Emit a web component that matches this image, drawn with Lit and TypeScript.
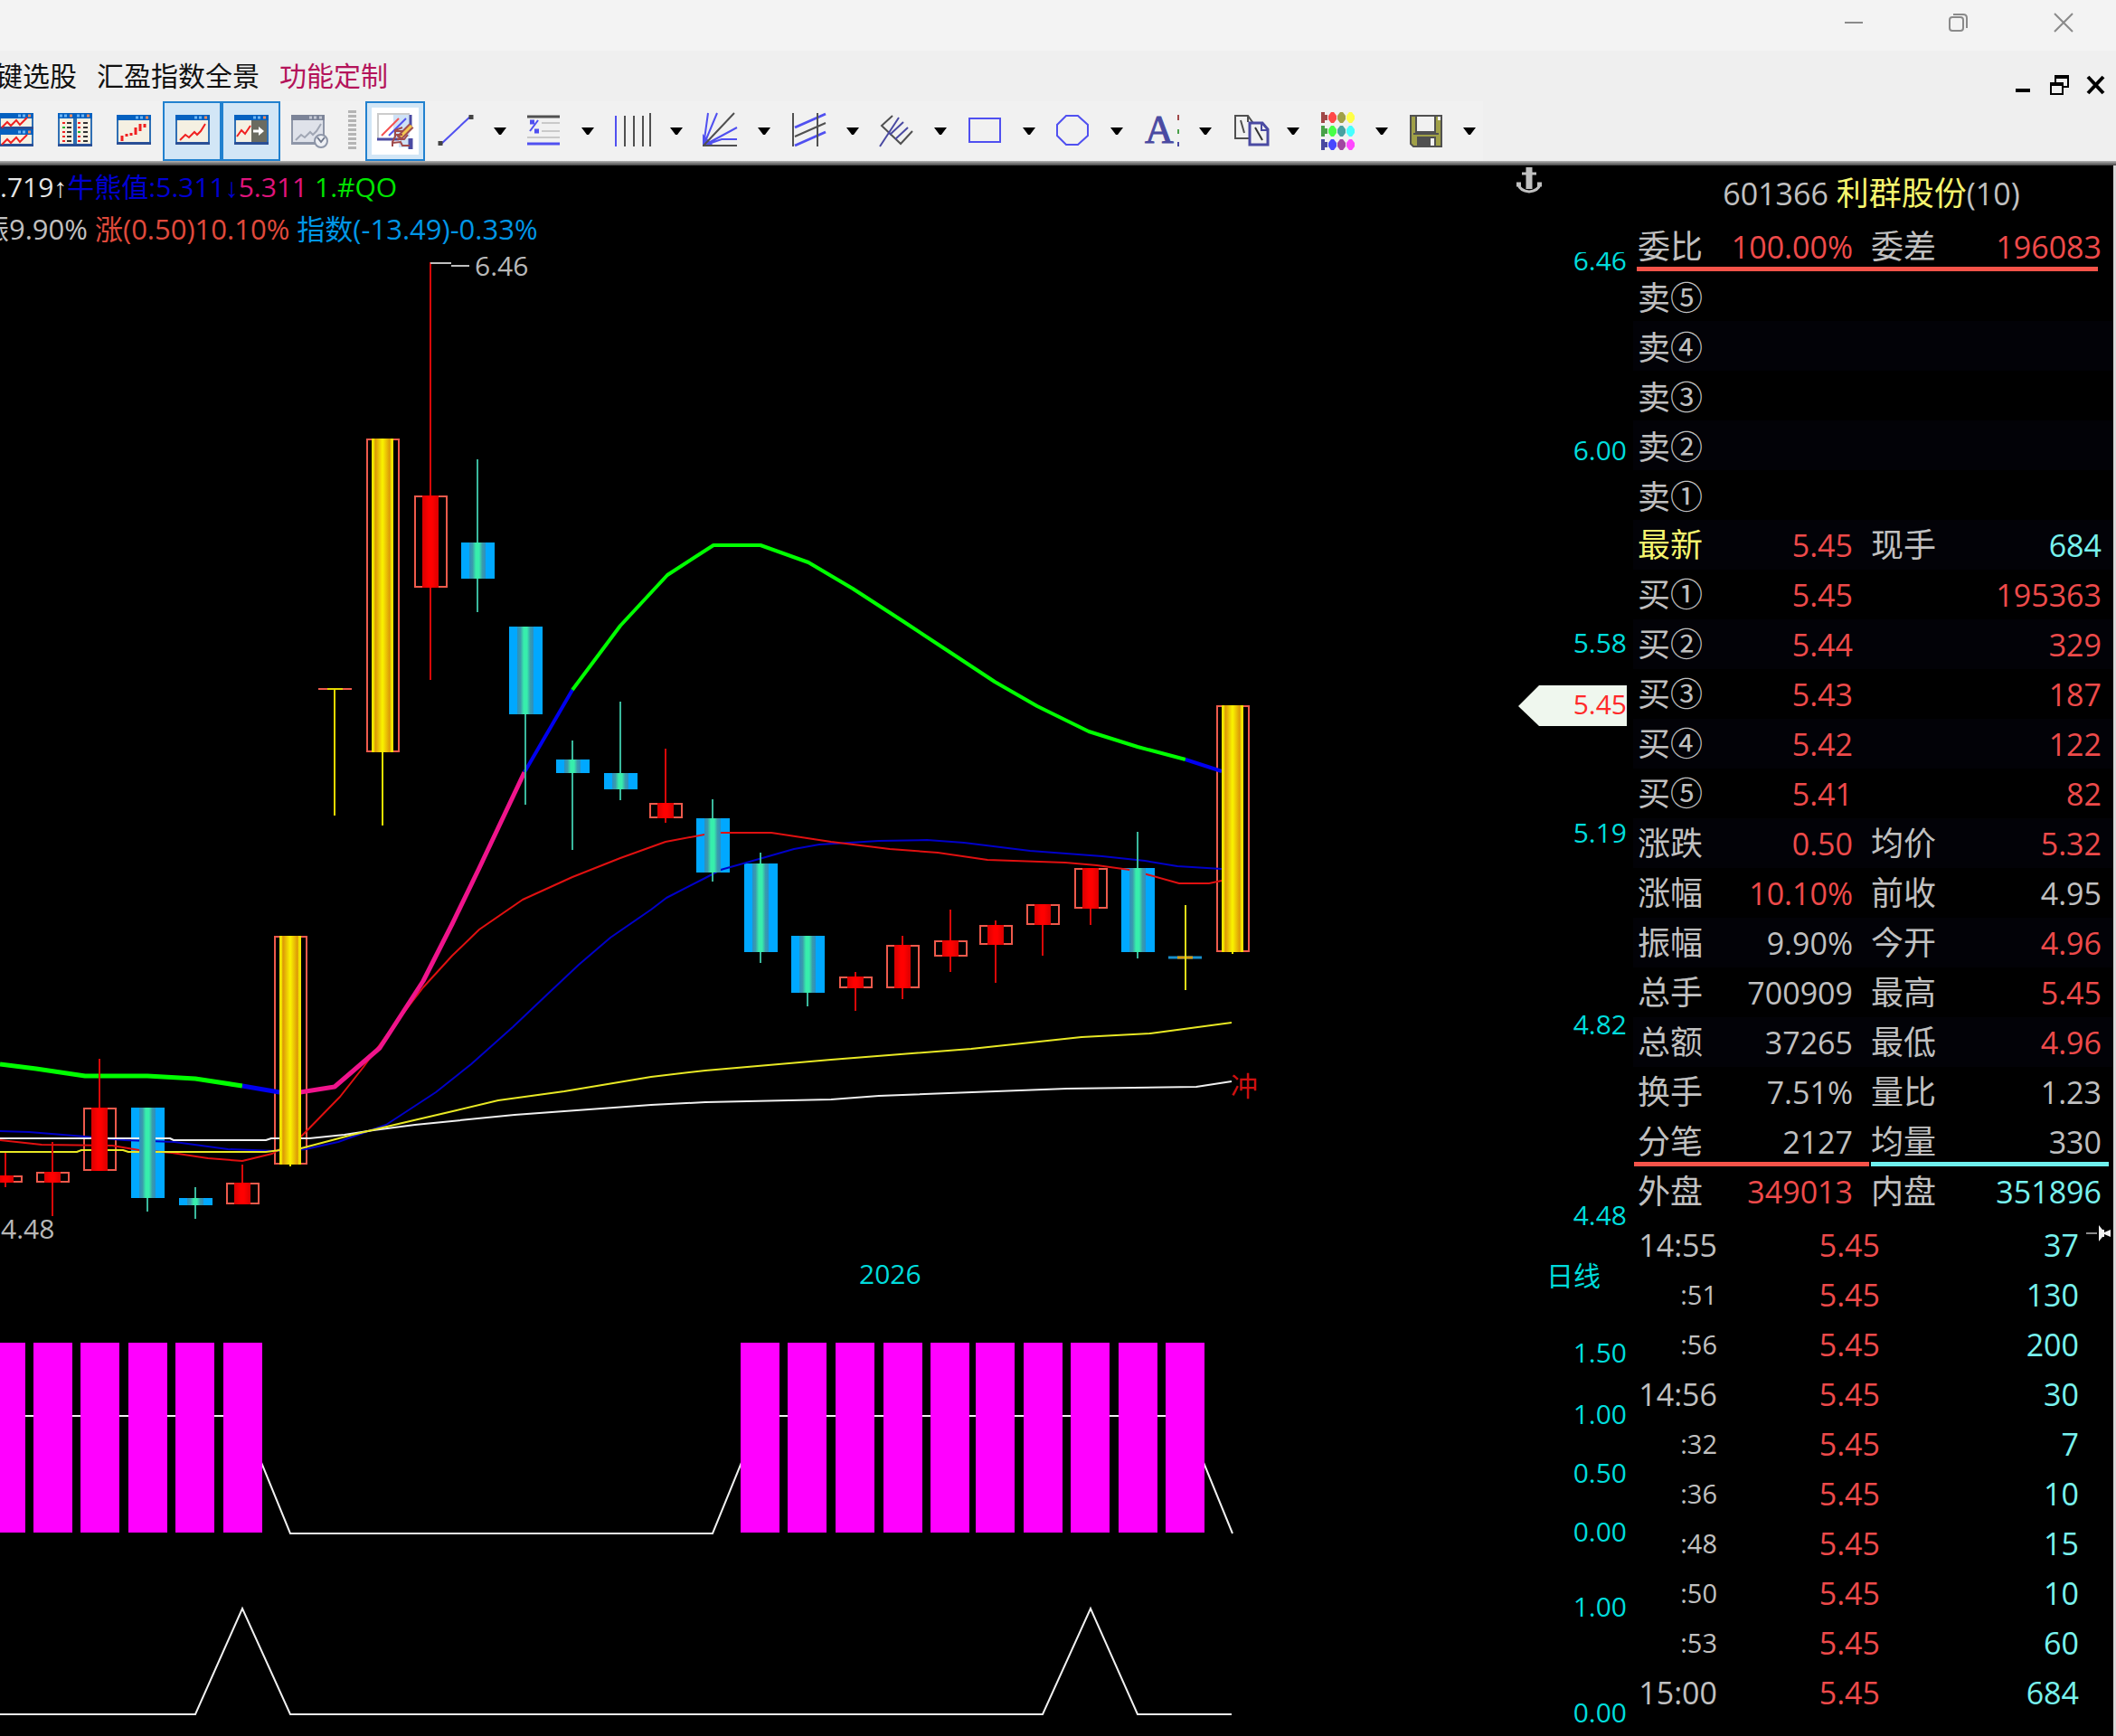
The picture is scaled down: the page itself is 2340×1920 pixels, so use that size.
import { LitElement, html, svg, css } from "lit";
import { customElement } from "lit/decorators.js";

type Kind = "red" | "cyan" | "gold";
// centre x, kind, body top, body bottom, wick top, wick bottom
type Candle = [number, Kind, number, number, number, number];

const candles: Candle[] = [
  [6, "red", 1300, 1308, 1275, 1313],
  [58, "red", 1296, 1308, 1263, 1345],
  [110, "red", 1225, 1295, 1171, 1295],
  [163, "cyan", 1225, 1325, 1225, 1340],
  [216, "cyan", 1325, 1333, 1313, 1348],
  [268, "red", 1308, 1332, 1288, 1332],
  [321, "gold", 1035, 1288, 1035, 1290],
  [423, "gold", 485, 832, 485, 913],
  [476, "red", 548, 650, 290, 752],
  [528, "cyan", 600, 640, 508, 677],
  [581, "cyan", 693, 790, 693, 890],
  [633, "cyan", 840, 855, 819, 940],
  [686, "cyan", 855, 873, 776, 885],
  [736, "red", 888, 905, 828, 910],
  [788, "cyan", 905, 965, 884, 975],
  [841, "cyan", 955, 1053, 943, 1065],
  [893, "cyan", 1035, 1098, 1035, 1113],
  [946, "red", 1080, 1093, 1075, 1118],
  [998, "red", 1045, 1093, 1035, 1105],
  [1051, "red", 1040, 1058, 1006, 1075],
  [1101, "red", 1023, 1045, 1018, 1087],
  [1153, "red", 1000, 1023, 1000, 1057],
  [1206, "red", 960, 1005, 960, 1023],
  [1258, "cyan", 960, 1053, 920, 1060],
  [1363, "gold", 780, 1053, 780, 1055],
];

const lines: [string, number, string][] = [
  ["#0000c8", 2, "0,1251 32,1252 94,1257 138,1261 193,1263 252,1271 305,1273 338,1271 374,1263 399,1254 427,1244 482,1208 521,1177 567,1136 606,1099 640,1067 675,1037 720,1006 737,993 780,971 797,962 829,953 878,939 906,934 972,930 1025,929 1066,932 1139,941 1219,947 1266,952 1302,958 1351,961"],
  ["#e01010", 2, "0,1261 46,1266 124,1267 154,1272 190,1275 230,1281 268,1284 301,1276 333,1257 376,1213 402,1180 429,1143 468,1092 500,1057 530,1028 578,995 633,970 686,949 736,931 779,923 797,921 853,921 919,931 984,939 1037,943 1092,951 1178,954 1213,957 1249,962 1268,967 1304,977 1337,977 1351,974"],
  ["#f0f0f0", 2, "0,1259 188,1259 192,1261 294,1261 300,1259 342,1259 381,1255 413,1250 459,1244 569,1233 720,1222 780,1219 919,1216 972,1212 1180,1204 1323,1202 1362,1196"],
  ["#e8e824", 2, "0,1274 85,1274 90,1272 136,1272 142,1274 294,1274 310,1272 333,1270 390,1255 432,1245 505,1228 551,1217 624,1207 720,1191 780,1184 919,1172 1074,1160 1196,1147 1272,1143 1362,1131"],
  ["#00ff00", 5, "0,1177 40,1182 94,1190 163,1190 216,1193 268,1201"],
  ["#0000f0", 5, "268,1201 309,1208"],
  ["#f0148c", 5, "332,1208 370,1202 420,1159 468,1085 500,1022 530,960 580,854"],
  ["#0000f0", 4, "580,854 633,763"],
  ["#00ff00", 4, "633,763 686,692 738,636 789,603 841,603 894,622 943,651 1000,688 1050,721 1100,754 1147,781 1204,809 1258,826 1311,840"],
  ["#0000f0", 4, "1311,840 1351,853"],
];

const priceAxis: [string, number][] = [
  ["6.46", 299], ["6.00", 509], ["5.58", 722], ["5.19", 932], ["4.82", 1144], ["4.48", 1355],
];
const barX = [-15, 37, 89, 142, 194, 247, 819, 871, 924, 977, 1029, 1079, 1132, 1184, 1237, 1289];

type Cell = [string, string];
const sells = ["⑤", "④", "③", "②", "①"];
const quotes: [Cell, Cell, Cell, Cell][] = [
  [["委比", ""], ["100.00%", "r"], ["委差", ""], ["196083", "r"]],
  ...sells.map((n) => [["卖" + n, "sell"], ["", ""], ["", ""], ["", ""]] as [Cell, Cell, Cell, Cell]),
  [["最新", "y"], ["5.45", "r"], ["现手", ""], ["684", "c"]],
  [["买①", ""], ["5.45", "r"], ["", ""], ["195363", "r"]],
  [["买②", ""], ["5.44", "r"], ["", ""], ["329", "r"]],
  [["买③", ""], ["5.43", "r"], ["", ""], ["187", "r"]],
  [["买④", ""], ["5.42", "r"], ["", ""], ["122", "r"]],
  [["买⑤", ""], ["5.41", "r"], ["", ""], ["82", "r"]],
  [["涨跌", ""], ["0.50", "r"], ["均价", ""], ["5.32", "r"]],
  [["涨幅", ""], ["10.10%", "r"], ["前收", ""], ["4.95", ""]],
  [["振幅", ""], ["9.90%", ""], ["今开", ""], ["4.96", "r"]],
  [["总手", ""], ["700909", ""], ["最高", ""], ["5.45", "r"]],
  [["总额", ""], ["37265", ""], ["最低", ""], ["4.96", "r"]],
  [["换手", ""], ["7.51%", ""], ["量比", ""], ["1.23", ""]],
  [["分笔", ""], ["2127", ""], ["均量", ""], ["330", ""]],
  [["外盘", ""], ["349013", "r"], ["内盘", ""], ["351896", "c"]],
];
const ticks: [string, string][] = [
  ["14:55", "37"], [":51", "130"], [":56", "200"], ["14:56", "30"], [":32", "7"],
  [":36", "10"], [":48", "15"], [":50", "10"], [":53", "60"], ["15:00", "684"],
];

const pane = (x: number, y: number, w: number, h: number, gray = false) => svg`
  <rect x=${x} y=${y} width=${w} height=${h} fill=${gray ? "#8e96a8" : "#2f6fb4"}/>
  <rect x=${x} y=${y} width=${w} height="6" fill=${gray ? "#7c8498" : "#0561c0"}/>
  <rect x=${x + 2} y=${y + 6} width=${w - 4} height=${h - 9} fill=${gray ? "#dfe2ea" : "#f5f0e2"}/>
  <rect x=${x} y=${y + h - 3} width=${w} height="3" fill=${gray ? "#8e96a8" : "#2a4f96"}/>
  <path d=${`M${x + w - 17} ${y + 3}h3m2 0h3`} stroke=${gray ? "#c4c8d4" : "#6db4f4"} stroke-width="3"/>
  <path d=${`M${x + w - 6} ${y + 3}h3`} stroke=${gray ? "#c4c8d4" : "#f08a5c"} stroke-width="3"/>`;

const icon = (body: unknown) =>
  html`<svg class="ico" viewBox="0 0 44 44" aria-hidden="true" fill="none">${body}</svg>`;

const BL = "#5050f0";
const NV = "#4a4aa2";
const GY = "#505050";

const viewIcons: [string, boolean, unknown][] = [
  ["叠窗", false, svg`${pane(3, 2, 38, 18)}${pane(3, 20, 38, 19)}
    <path d="M6 18l6-6 4 4 6-6 4 5 8-8M6 37l6-6 4 4 6-6 4 5 8-8" stroke="#f02020" stroke-width="2"/>`],
  ["双列", false, svg`${pane(3, 2, 19, 37)}${pane(22, 2, 19, 37)}
    <path d="M8 13h3M8 23h3M8 28h3M8 33h3M25 13h3M25 28h3M25 33h3M25 18h3" stroke="#f02020" stroke-width="2"/>
    <path d="M8 18h3M25 23h3" stroke="#20b030" stroke-width="2"/>
    <path d="M13 13h5M13 18h5M13 23h5M13 28h5M13 33h5M31 13h5M31 18h5M31 23h5M31 28h5M31 33h5" stroke="#333" stroke-width="2"/>`],
  ["分时", false, svg`${pane(3, 4, 38, 33)}
    <path d="M9 33v-6M14 28v-3M19 27v-3M24 26v-8M29 22v-8M34 18v-4" stroke="#f02020" stroke-width="3"/>`],
  ["走势", true, svg`${pane(3, 4, 38, 33)}
    <path d="M8 32l6-6 4 3 6-6 3 3 4-4 5-8" stroke="#f02020" stroke-width="2"/>`],
  ["切换", true, svg`${pane(3, 4, 38, 33)}
    <rect x="22" y="10" width="17" height="24" fill="#6b6b60"/>
    <path d="M6 28l5-7 4 4 6-9" stroke="#f02020" stroke-width="2"/>
    <path d="M24 22h9" stroke="#fff" stroke-width="3"/><path d="M30 17l6 5-6 5z" fill="#fff"/>`],
  ["历史", false, svg`${pane(1, 4, 37, 33, true)}
    <path d="M6 32l6-6 4 3 6-6 3 3 4-4 5-8" stroke="#a0a6b4" stroke-width="2"/>
    <circle cx="34" cy="33" r="7" fill="#eef0f4" stroke="#8e96a8" stroke-width="2"/>
    <path d="M30 29l4 5 4-5" stroke="#70788c" stroke-width="2"/>`],
];

const drawIcon = svg`
  <rect width="44" height="44" fill="#fff"/>
  <rect x="20" y="4" width="18" height="25" fill="#cfe2f6"/>
  <rect x="26" y="30" width="14" height="10" fill="#cfe2f6"/>
  <path d="M3 30V3h35" stroke="#cccccc" stroke-width="2"/>
  <path d="M2 31h24M39 4v14" stroke=${NV} stroke-width="3"/>
  <path d="M39 30v12" stroke=${NV} stroke-width="5"/>
  <path d="M7 27L26 8" stroke="#f45050" stroke-width="2"/>
  <path d="M15 27L34 8" stroke=${BL} stroke-width="2"/>
  <path d="M26 30L40 16" stroke="#a05050" stroke-width="7"/>
  <path d="M28 28L40 16" stroke="#f4c850" stroke-width="3"/>
  <path d="M30 18l-8 3v7l-3 6v5M22 22h9M22 26h8M24 31h8l4-5M19 35l9-1 2 4h8" stroke="#a04a4a" stroke-width="2"/>`;

const drawTools: [string, unknown][] = [
  ["直线", svg`<path d="M5 37L39 5" stroke=${BL} stroke-width="2"/><path d="M5 33v5M39 4v5" stroke="#444" stroke-width="5"/>`],
  ["百分比线", svg`<path d="M4 6h36" stroke=${GY} stroke-width="3"/><path d="M20 13h20M20 22h20M4 29h36" stroke="#c9c9c9" stroke-width="2"/>
    <path d="M4 36h36" stroke=${BL} stroke-width="3"/><path d="M7 12h5M12 22h5" stroke=${BL} stroke-width="5"/><path d="M7 22l9-12" stroke=${BL} stroke-width="2"/>`],
  ["周期线", svg`<path d="M4 5v34" stroke=${BL} stroke-width="2"/><path d="M14 5v34M24 5v34M34 5v34M42 2v37" stroke=${GY} stroke-width="2"/>`],
  ["扇形线", svg`<path d="M4 38L9 2M4 38L19 2M4 38L41 18M4 38L24 31H41" stroke=${BL} stroke-width="2"/>
    <path d="M3 25L15 38H3z" fill=${BL}/><path d="M4 38L38 2M3 38h38" stroke=${GY} stroke-width="2"/>`],
  ["通道线", svg`<path d="M7 18L32 7 41 3M7 38L41 23" stroke=${BL} stroke-width="3"/><path d="M7 28L41 13M5 2v37M32 2v37" stroke=${GY} stroke-width="2"/>`],
  ["叉线", svg`<path d="M18 5L6 16 27 36 40 22" stroke=${GY} stroke-width="2"/><path d="M4 39L25 7M30 12L15 26M35 18L21 31" stroke=${NV} stroke-width="2"/>`],
  ["矩形", svg`<rect x="5" y="8" width="34" height="26" stroke=${BL} stroke-width="2"/>`],
  ["圆形", svg`<path d="M15 5H28L39 15V27L28 37H15L5 27V15z" stroke=${BL} stroke-width="2"/>`],
  ["文字", svg`<text class="serif" x="4" y="35" fill=${NV}>A</text><path d="M41 4v6" stroke="#a04848" stroke-width="2"/>
    <path d="M41 20v5" stroke="#48a048" stroke-width="2"/><path d="M41 34v5" stroke=${NV} stroke-width="2"/>`],
  ["复制", svg`<g transform="translate(3 0)"><path d="M4 5H18L23 12V30H4z" fill="#f1f1f1" stroke=${GY} stroke-width="2"/><path d="M10 10l4 14M18 5v7" stroke=${GY} stroke-width="2"/>
    <path d="M20 13H34L40 20V37H20z" fill="#f1f1f1" stroke=${NV} stroke-width="3"/><path d="M33 13v8h7" stroke=${NV} stroke-width="2"/><path d="M26 18l8 14" stroke="#333" stroke-width="2"/></g>`],
  ["颜色", svg`${[
    ["#a04848", "#ff4848", "#a0a048", "#ffff48"],
    ["#48a048", "#48ff48", "#48a0a0", "#48ffff"],
    ["#4848a0", "#4848ff", "#a048a0", "#ff48ff"],
  ].map((row, r) => row.map((c, i) => i === 0
    ? svg`<path d=${`M4 ${1 + r * 15}h4v3h3v6h-3v3h-4z`} fill=${c}/>`
    : svg`<path d=${`M${15 + (i - 1) * 10} ${1 + r * 15}h3l3 4v4l-3 4h-3l-3-4v-4z`} fill=${c}/>`))}`],
  ["保存", svg`<path d="M6 5H40V39H9L6 36z" fill="#a0a048" stroke=${GY} stroke-width="2"/><rect x="12" y="5" width="21" height="18" fill="#f1f1f1" stroke=${GY} stroke-width="2"/>
    <rect x="13" y="28" width="21" height="11" fill=${GY}/><rect x="28" y="30" width="4" height="8" fill="#f1f1f1"/><path d="M9 25h28" stroke=${GY} stroke-width="2"/><rect x="36" y="6" width="3" height="4" fill="#f1f1f1"/>`],
];

@customElement("app-root")
export class AppRoot extends LitElement {
  static styles = css`
    :host {
      display: block;
      font-family: "Open Sans", "Noto Sans CJK SC", sans-serif;
      font-size: 30px;
      color: #c0c0c0;
    }
    * { box-sizing: border-box; }
    button {
      font: inherit;
      color: inherit;
      background: none;
      border: 0;
      padding: 0;
      display: flex;
      align-items: center;
      justify-content: center;
    }
    .app { min-height: 100vh; display: flex; flex-direction: column; background: #000; overflow: hidden; }
    .title { display: flex; justify-content: flex-end; height: 56px; background: #f3f3f3; }
    .title button { width: 116px; height: 50px; }
    .win { width: 22px; height: 22px; }
    .menu { display: flex; align-items: center; justify-content: space-between; height: 56px; background: #efefef; color: #111; }
    .items { display: flex; gap: 22px; margin-left: -5px; }
    .items button { line-height: 44px; white-space: nowrap; }
    .items .hot { color: #b4145a; }
    .mdi { display: flex; align-items: center; gap: 18px; padding: 20px 12px 0 0; }
    .tools { display: flex; height: 66px; background: #efefef; }
    .views { display: flex; margin-left: -15px; background: #f1f1f1; }
    .views button { width: 65px; height: 66px; }
    .ico { width: 44px; height: 44px; display: block; overflow: visible; }
    .on { background: #d2e6f6; box-shadow: inset 0 0 0 2px #2181cf; }
    .grip { width: 29px; padding: 10px 10px; background: #f1f1f1; }
    .grip i { display: block; height: 43px; background: repeating-linear-gradient(#b4b4b4 0 3px, transparent 3px 5px); }
    .pick { width: 66px; height: 66px; }
    .pick .ico { box-shadow: 0 0 0 4px #fff; }
    .draws { display: grid; grid-template-columns: repeat(12, 1fr); width: 1170px; background: #f1f1f1; }
    .split { display: grid; grid-template-columns: 1fr 30px; }
    .caret { width: 14px; height: 8px; }
    .edge { height: 5px; background: linear-gradient(#b4b4b4, #7c7c7c 50%, #444); }
    .serif { font-family: "Liberation Serif", serif; font-size: 44px; stroke: #4a4aa2; stroke-width: 1px; }
    .work { flex: 1; display: grid; grid-template-columns: minmax(0, 1fr) 531px; border-right: 3px solid #d8d8d8; }
    .info { display: flex; justify-content: space-between; height: 96px; padding-right: 100px; }
    .info p { margin: 0; height: 47px; line-height: 47px; white-space: pre; }
    .info .second { margin-left: -21px; font-size: 31px; }
    .arrow { font-family: "Liberation Sans", sans-serif; line-height: 30px; }
    .anchor { width: 30px; height: 30px; margin-top: 2px; }
    .plot { display: block; width: 100%; height: auto; font-size: 30px; }
    .wht { color: #e6e6e6; }
    .navy { color: #0000d2; }
    .pink { color: #e0147c; }
    .lime { color: #00e600; }
    .fall { color: #e04a3c; }
    .sky { color: #0096e6; }
    .panel { position: relative; font-size: 34px; }
    .panel h1 { margin: 0; height: 62px; line-height: 62px; font-size: 34px; font-weight: 400; text-align: center; padding-right: 4px; }
    .name { font-size: 36px; color: #f5f56e; }
    table { border-collapse: collapse; table-layout: fixed; width: 100%; }
    td, th { padding: 0; height: 55px; line-height: 50px; font-weight: 400; text-align: right; white-space: nowrap; }
    th { font-size: 36px; text-align: left; }
    .quote { background: linear-gradient(#f75349, #f75349) no-repeat 4px 50px / 510px 5px; }
    .quote th:first-child { padding-left: 5px; }
    .quote .sell { padding-top: 5px; }
    .c1 { width: 84px; }
    .c2 { width: 159px; }
    .c3 { width: 100px; }
    .quote th:nth-child(3) { padding-left: 20px; }
    .quote td:last-child { padding-right: 13px; }
    .zebra { background: #020207; }
    .y { color: #f5f56e; }
    .r { color: #ee4a4a; }
    .c { color: #78f2ee; }
    .rules { display: grid; grid-template-columns: 260px 1fr; gap: 2px; height: 5px; margin: -60px 5px 59px 1px; position: relative; }
    .rules i:first-child { background: #f75349; }
    .rules i:last-child { background: #6ef0ee; }
    .ticks .t1 { width: 93px; }
    .ticks .t2 { width: 180px; }
    .ticks td:last-child { padding-right: 38px; }
    .ticks .sec { font-size: 29px; }
    .pin { position: absolute; right: 1px; top: 1171px; width: 30px; height: 20px; }
  `;

  private candleBack([x, k, t, b]: Candle) {
    return k === "cyan"
      ? svg`<rect x=${x - 18} y=${t} width="37" height=${b - t} fill="#00a8ff"/>`
      : svg`<rect x=${x - 17} y=${t + 1} width="35" height=${b - t - 2} fill="none" stroke="#ee5a4c" stroke-width="2"/>`;
  }

  private candleFront([x, k, t, b, wt, wb]: Candle) {
    const wick = k === "cyan" ? "#3ab89c" : k === "red" ? "#d80808" : "#e6e600";
    const wide = k === "gold" ? 12 : 9;
    return svg`
      <path d=${`M${x} ${wt}V${wb}`} stroke=${wick} stroke-width="2"/>
      <rect x=${x - wide} y=${t} width=${wide * 2} height=${b - t} fill=${`url(#${k})`}/>`;
  }

  private priceChart() {
    return html`<svg class="plot" viewBox="0 279 1806 1161" role="img" aria-label="日线">
      <defs>
        <linearGradient id="red"><stop offset="0" stop-color="#d80000"/><stop offset=".4" stop-color="#ff0000"/><stop offset=".6" stop-color="#ff0000"/><stop offset="1" stop-color="#d80000"/></linearGradient>
        <linearGradient id="cyan"><stop offset="0" stop-color="#2c8fc0"/><stop offset=".2" stop-color="#3a9cac"/><stop offset=".4" stop-color="#37eeac"/><stop offset=".6" stop-color="#37eeac"/><stop offset=".8" stop-color="#3a9cac"/><stop offset="1" stop-color="#2c8fc0"/></linearGradient>
        <linearGradient id="gold"><stop offset="0" stop-color="#f0e400"/><stop offset=".1" stop-color="#f0e400"/><stop offset=".16" stop-color="#dc9608"/><stop offset=".5" stop-color="#faf400"/><stop offset=".84" stop-color="#dc9608"/><stop offset=".9" stop-color="#f0e400"/><stop offset="1" stop-color="#f0e400"/></linearGradient>
      </defs>
      ${candles.map((c) => this.candleBack(c))}
      ${lines.map(([c, w, p]) => svg`<polyline points=${p} fill="none" stroke=${c} stroke-width=${w} stroke-linejoin="round"/>`)}
      ${candles.map((c) => this.candleFront(c))}
      <path d="M352 762H389" stroke="#ee5a4c" stroke-width="2"/>
      <path d="M362 762H379M370 762V902" stroke="#e6d800" stroke-width="2"/>
      <path d="M1292 1059H1329" stroke="#1890cc" stroke-width="3"/>
      <path d="M1302 1059H1319" stroke="#d89a10" stroke-width="3"/>
      <path d="M1311 1001V1095" stroke="#e0dc18" stroke-width="2"/>
      <path d="M476 291H499M499 294H519" stroke="#c0c0c0" stroke-width="2"/>
      <text x="525" y="305" fill="#b8b8b8">6.46</text>
      <text x="1" y="1370" fill="#b8b8b8">4.48</text>
      <text x="1361" y="1212" fill="#d01010">冲</text>
      <text x="950" y="1420" fill="#00dcdc">2026</text>
      <path d="M1679 781L1702 758H1799V803H1702z" fill="#eff7ee"/>
      <text x="1799" y="790" text-anchor="end" fill="#ff2a2a">5.45</text>
      <g fill="#00dcdc" text-anchor="end">
        ${priceAxis.map(([t, y]) => svg`<text x="1799" y=${y}>${t}</text>`)}
        <text x="1770" y="1422">日线</text>
      </g>
    </svg>`;
  }

  private indicators() {
    return html`
      <svg class="plot" viewBox="0 1440 1806 280" role="img" aria-label="指标一">
        <polyline points="0,1566 268,1566 321,1696 788,1696 841,1566 1310,1566 1363,1696" fill="none" stroke="#f0f0f0" stroke-width="2"/>
        ${barX.map((x) => svg`<rect x=${x} y="1485" width="43" height="210" fill="#ff00ff"/>`)}
        <g fill="#00dcdc" text-anchor="end">
          <text x="1799" y="1507">1.50</text><text x="1799" y="1575">1.00</text>
          <text x="1799" y="1640">0.50</text><text x="1799" y="1705">0.00</text>
        </g>
      </svg>
      <svg class="plot" viewBox="0 1720 1806 200" role="img" aria-label="指标二">
        <polyline points="0,1896 216,1896 268,1779 321,1896 1153,1896 1206,1779 1258,1896 1362,1896" fill="none" stroke="#f0f0f0" stroke-width="2"/>
        <g fill="#00dcdc" text-anchor="end">
          <text x="1799" y="1788">1.00</text><text x="1799" y="1905">0.00</text>
        </g>
      </svg>`;
  }

  render() {
    return html`<div class="app">
      <header class="title">
        <button aria-label="最小化"><svg class="win" viewBox="0 0 22 22"><path d="M1 11H21" stroke="#8a8a8a" stroke-width="2"/></svg></button>
        <button aria-label="还原"><svg class="win" viewBox="0 0 22 22" fill="none" stroke="#8a8a8a" stroke-width="2"><rect x="1" y="5" width="15" height="15" rx="3"/><path d="M5 2H16Q20 2 20 6V17"/></svg></button>
        <button aria-label="关闭"><svg class="win" viewBox="0 0 22 22"><path d="M1 1L21 21M21 1L1 21" stroke="#8a8a8a" stroke-width="2"/></svg></button>
      </header>
      <nav class="menu">
        <div class="items">
          <button>键选股</button><button>汇盈指数全景</button><button class="hot">功能定制</button>
        </div>
        <div class="mdi">
          <button aria-label="最小化子窗口"><svg class="win" viewBox="0 0 22 22"><path d="M3 17H19" stroke="#000" stroke-width="4"/></svg></button>
          <button aria-label="还原子窗口"><svg class="win" viewBox="0 0 22 22" fill="none" stroke="#000" stroke-width="2"><path d="M2 9h13v12H2zM7 9V1h14v12h-6"/><path d="M1 10h15M6 2h16" stroke-width="4"/></svg></button>
          <button aria-label="关闭子窗口"><svg class="win" viewBox="0 0 22 22"><path d="M3 2L20 20M20 2L3 20" stroke="#000" stroke-width="4"/></svg></button>
        </div>
      </nav>
      <div class="tools">
        <div class="views">
          ${viewIcons.map(([n, on, b]) => html`<button aria-label=${n} class=${on ? "on" : ""}>${icon(b)}</button>`)}
        </div>
        <div class="grip"><i></i></div>
        <button class="pick on" aria-label="画线">${icon(drawIcon)}</button>
        <div class="draws">
          ${drawTools.map(([n, b]) => html`<div class="split">
            <button aria-label=${n}>${icon(b)}</button>
            <button aria-label=${n + "选项"}><svg class="caret" viewBox="0 0 14 8"><path d="M0 0H14L8 8H6z" fill="#000"/></svg></button>
          </div>`)}
        </div>
      </div>
      <div class="edge"></div>
      <main class="work">
        <section>
          <div class="info">
            <div>
              <p><span class="wht">.719<span class="arrow">↑</span></span><span class="navy">牛熊值:5.311<span class="arrow">↓</span></span><span class="pink">5.311</span><span class="lime"> 1.#QO</span></p>
              <p class="second">振9.90%<span class="fall"> 涨(0.50)10.10%</span><span class="sky"> 指数(-13.49)-0.33%</span></p>
            </div>
            <svg class="anchor" viewBox="0 0 30 30" fill="none" stroke="#c0c0c0"><path d="M15 0V24" stroke-width="7"/><path d="M7 7H23" stroke-width="3"/><path d="M3 19Q5 26 15 27Q25 26 27 19" stroke-width="3"/><path d="M1 19h5M24 19h5" stroke-width="5"/></svg>
          </div>
          ${this.priceChart()}
          ${this.indicators()}
        </section>
        <aside class="panel">
          <h1>601366 <span class="name">利群股份</span>(10)</h1>
          <table class="quote">
            <colgroup><col class="c1" /><col class="c2" /><col class="c3" /><col /></colgroup>
            <tbody>
              ${quotes.map(([a, b, c, d], i) => html`<tr class=${i > 0 && i < 18 && i % 2 === 0 ? "zebra" : ""}>
                <th class=${a[1]}>${a[0]}</th><td class=${b[1]}>${b[0]}</td>
                <th class=${c[1]}>${c[0]}</th><td class=${d[1]}>${d[0]}</td>
              </tr>`)}
            </tbody>
          </table>
          <div class="rules"><i></i><i></i></div>
          <table class="ticks">
            <colgroup><col class="t1" /><col class="t2" /><col /></colgroup>
            <tbody>
              ${ticks.map(([t, v]) => html`<tr>
                <td class=${t[0] === ":" ? "sec" : ""}>${t}</td><td class="r">5.45</td><td class="c">${v}</td>
              </tr>`)}
            </tbody>
          </table>
          <svg class="pin" viewBox="0 0 30 20" aria-hidden="true"><path d="M1 10H13" stroke="#8c8c8c" stroke-width="2"/><path d="M15 1l4 5h2v3l7-3v8l-7-3v3h-2l-4 5z" fill="#f0f0f0"/></svg>
        </aside>
      </main>
    </div>`;
  }
}
